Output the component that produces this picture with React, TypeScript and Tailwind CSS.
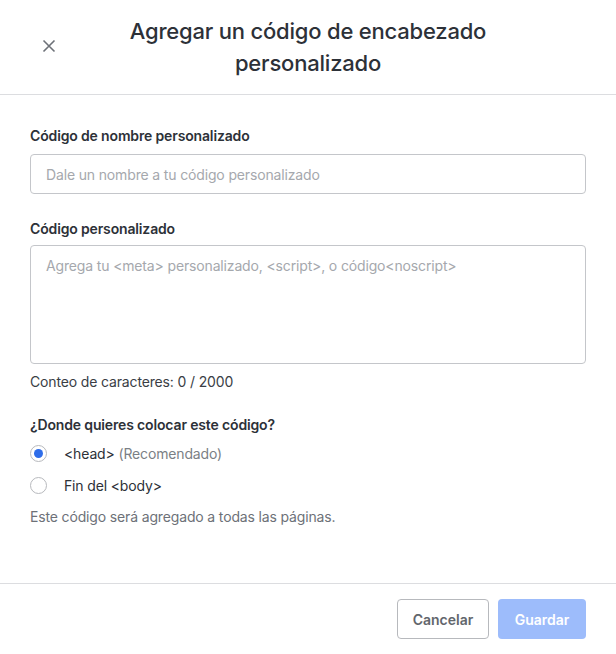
import React from 'react';

const App: React.FC = () => {
  return (
    <div
      className="w-[616px] h-[654px] bg-white flex flex-col text-[#2d3138]"
      style={{ fontFamily: 'Inter, "Noto Sans", sans-serif' }}
    >
      {/* Encabezado */}
      <div className="h-[95px] border-b border-[#dcdde0] flex items-center relative shrink-0">
        <button className="absolute left-[42px] top-[39px] w-[14px] h-[14px] text-[#6d7178]">
          <svg viewBox="0 0 14 14" className="w-[14px] h-[14px]" fill="none" stroke="currentColor" strokeWidth="1.6">
            <path d="M1.5 1.5l11 11M12.5 1.5l-11 11" />
          </svg>
        </button>
        <h2 className="w-full text-center text-[22px] leading-[32px] font-medium text-[#2d3138] px-[110px] tracking-[-0.2px]">
          Agregar un código de encabezado personalizado
        </h2>
      </div>

      {/* Cuerpo */}
      <div className="flex-1 px-[30px] pt-[31px] text-[14px] tracking-[-0.15px]">
        <label className="block font-semibold leading-[20px] mb-[8px]">
          Código de nombre personalizado
        </label>
        <input
          className="w-full h-[40px] border border-[#c4c6ca] rounded-[4px] px-[15px] placeholder-[#a5a8ad] outline-none"
          placeholder="Dale un nombre a tu código personalizado"
        />

        <label className="block font-semibold leading-[20px] mt-[25px] mb-[6px]">
          Código personalizado
        </label>
        <textarea
          className="block w-full h-[119px] border border-[#c4c6ca] rounded-[4px] px-[15px] py-[9px] placeholder-[#a5a8ad] outline-none resize-none"
          placeholder="Agrega tu <meta> personalizado, <script>, o código<noscript>"
        />
        <p className="leading-[20px] mt-[8px] text-[#3a3e45]">Conteo de caracteres: 0 / 2000</p>

        <p className="font-semibold leading-[20px] mt-[23px]">¿Donde quieres colocar este código?</p>

        <div className="mt-[8px] flex items-center h-[20px]">
          <span className="w-[17px] h-[17px] rounded-full border border-[#b7b9bd] flex items-center justify-center">
            <span className="w-[9px] h-[9px] rounded-full bg-[#2f6de9]" />
          </span>
          <span className="ml-[17px]">
            &lt;head&gt; <span className="text-[#7b7f85]">(Recomendado)</span>
          </span>
        </div>
        <div className="mt-[12px] flex items-center h-[20px]">
          <span className="w-[17px] h-[17px] rounded-full border border-[#b7b9bd]" />
          <span className="ml-[17px]">Fin del &lt;body&gt;</span>
        </div>

        <p className="leading-[20px] mt-[12px] text-[#6d7178]">
          Este código será agregado a todas las páginas.
        </p>
      </div>

      {/* Pie */}
      <div className="h-[71px] border-t border-[#dcdde0] flex items-center justify-end gap-[9px] px-[30px] shrink-0">
        <button className="h-[40px] w-[92px] border border-[#b7b9bd] rounded-[4px] text-[14px] font-semibold text-[#62666c] bg-white">
          Cancelar
        </button>
        <button className="h-[40px] w-[88px] rounded-[4px] text-[14px] font-semibold text-white bg-[#9dbcfb]">
          Guardar
        </button>
      </div>
    </div>
  );
};

export default App;
